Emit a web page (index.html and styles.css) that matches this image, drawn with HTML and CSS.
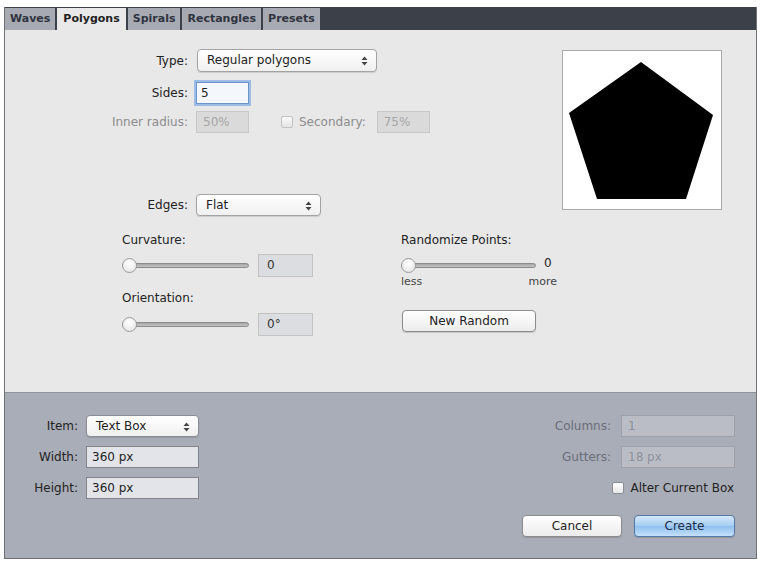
FILE: index.html
```html
<!DOCTYPE html>
<html lang="en">
<head>
  <meta charset="UTF-8">
  <title>Polygons</title>
  <link rel="stylesheet" href="styles.css">
</head>
<body>

  <div class="window">
    <!-- Tabs -->
    <div class="tabs">
      <div class="tab">Waves</div>
      <div class="tab active">Polygons</div>
      <div class="tab">Spirals</div>
      <div class="tab">Rectangles</div>
      <div class="tab">Presets</div>
    </div>

    <!-- Main panel -->
    <div class="panel">
      <div class="top">
        <div class="form">
          <div class="row">
            <label class="lbl">Type:</label>
            <div class="select type-select">Regular polygons
              <svg class="arrows" width="7" height="10" viewBox="0 0 7 10"><path d="M3.5 0.5 L6.5 4 L0.5 4 Z M3.5 9.5 L6.5 6 L0.5 6 Z" fill="#444"/></svg>
            </div>
          </div>
          <div class="row sides-row">
            <label class="lbl">Sides:</label>
            <div class="input focus small">5</div>
          </div>
          <div class="row inner-row">
            <label class="lbl disabled">Inner radius:</label>
            <div class="input off small">50%</div>
            <span class="check"></span>
            <label class="disabled secondary">Secondary:</label>
            <div class="input off small">75%</div>
          </div>
          <div class="row edges-row">
            <label class="lbl">Edges:</label>
            <div class="select edges-select">Flat
              <svg class="arrows" width="7" height="10" viewBox="0 0 7 10"><path d="M3.5 0.5 L6.5 4 L0.5 4 Z M3.5 9.5 L6.5 6 L0.5 6 Z" fill="#444"/></svg>
            </div>
          </div>
        </div>
        <div class="preview">
          <svg width="158" height="158" viewBox="0 0 158 158">
            <polygon points="78,11 150,64 123,148 34,148 6,62" fill="#000"/>
          </svg>
        </div>
      </div>

      <div class="sliders">
        <div class="col">
          <div class="cap">Curvature:</div>
          <div class="slider-row">
            <div class="slider"><span class="thumb"></span></div>
            <div class="input value">0</div>
          </div>
          <div class="cap orient">Orientation:</div>
          <div class="slider-row second">
            <div class="slider"><span class="thumb"></span></div>
            <div class="input value">0°</div>
          </div>
        </div>
        <div class="col">
          <div class="cap">Randomize Points:</div>
          <div class="slider-row">
            <div class="slider wide"><span class="thumb"></span></div>
            <span class="zero">0</span>
          </div>
          <div class="range-labels">
            <span>less</span>
            <span>more</span>
          </div>
          <div class="button random">New Random</div>
        </div>
      </div>
    </div>

    <!-- Bottom panel -->
    <div class="footer">
      <div class="fgrid">
        <label class="flbl">Item:</label>
        <div class="select item-select">Text Box
          <svg class="arrows" width="7" height="10" viewBox="0 0 7 10"><path d="M3.5 0.5 L6.5 4 L0.5 4 Z M3.5 9.5 L6.5 6 L0.5 6 Z" fill="#444"/></svg>
        </div>
        <label class="flbl">Width:</label>
        <div class="input fin">360 px</div>
        <label class="flbl">Height:</label>
        <div class="input fin">360 px</div>
      </div>

      <div class="fright">
        <div class="frow">
          <label class="flbl off-lbl">Columns:</label>
          <div class="input foff">1</div>
        </div>
        <div class="frow gutters">
          <label class="flbl off-lbl">Gutters:</label>
          <div class="input foff">18 px</div>
        </div>
        <div class="frow alter">
          <span class="check fcheck"></span>
          <label>Alter Current Box</label>
        </div>
        <div class="frow buttons">
          <div class="button">Cancel</div>
          <div class="button primary">Create</div>
        </div>
      </div>
    </div>
  </div>

</body>
</html>
```

FILE: styles.css
```css
body {
  margin: 0;
  background-color: #fff;
  font-family: "DejaVu Sans", sans-serif;
  font-size: 12px;
  color: #222;
}

/* Window frame */
.window {
  margin: 7px 0 0 4px;
  width: 753px;
  height: 552px;
  box-sizing: border-box;
  border: 1px solid #6f7176;
  border-top: 0;
  display: flex;
  flex-direction: column;
}

/* Tab bar */
.tabs {
  height: 23px;
  box-sizing: border-box;
  padding-top: 1px;
  background-color: #3c4049;
  display: flex;
  gap: 2px;
}

.tab {
  padding: 0 5px;
  height: 22px;
  line-height: 22px;
  background-color: #a7aab2;
  color: #2f3440;
  font-size: 11px;
  font-weight: bold;
}

.tab.active {
  background-color: #e9e9e9;
  color: #222;
  padding: 0 6px;
}

/* Main panel */
.panel {
  height: 362px;
  background-color: #e8e8e8;
  border-bottom: 1px solid #8f929a;
}

.top {
  display: flex;
  padding-top: 19px;
}

.form {
  flex: 1;
}

.row {
  display: flex;
  align-items: center;
}

.lbl {
  width: 183px;
  margin-right: 8px;
  text-align: right;
}

.disabled {
  color: #8c8c8c;
}

.sides-row {
  margin-top: 10px;
}

.inner-row {
  margin-top: 7px;
}

.edges-row {
  margin-top: 61px;
}

.secondary {
  margin: 0 11px 0 6px;
}

/* Popup buttons */
.select {
  position: relative;
  box-sizing: border-box;
  height: 23px;
  line-height: 21px;
  padding-left: 9px;
  border: 1px solid #a3a3a3;
  border-radius: 4px;
  background: linear-gradient(#ffffff, #f0f0f0);
  box-shadow: 0 1px 1px rgba(0, 0, 0, 0.12);
}

.arrows {
  position: absolute;
  right: 8px;
  top: 6px;
}

.type-select {
  width: 180px;
  margin-left: 1px;
}

.edges-select {
  width: 125px;
  height: 22px;
  line-height: 20px;
}

/* Text fields */
.input {
  box-sizing: border-box;
  height: 22px;
  line-height: 20px;
  padding-left: 6px;
  border: 1px solid #b5b5b5;
  background-color: #fff;
}

.small {
  width: 53px;
}

.focus {
  border: 1px solid #6d93c9;
  box-shadow: 0 0 0 2px #9cbde6;
  padding-left: 4px;
  background-color: #f4f8fd;
}

.off {
  background-color: #dadada;
  border-color: #c8c8c8;
  color: #a6a6a6;
}

.check {
  display: inline-block;
  width: 12px;
  height: 12px;
  margin-left: 32px;
  box-sizing: border-box;
  border: 1px solid #c2c2c2;
  border-radius: 2px;
  background: linear-gradient(#fafafa, #e4e4e4);
}

/* Preview */
.preview {
  width: 160px;
  height: 160px;
  box-sizing: border-box;
  margin: 1px 34px 0 0;
  border: 1px solid #a9a9a9;
  background-color: #fff;
}

/* Sliders */
.sliders {
  display: grid;
  grid-template-columns: 279px 160px;
  padding-left: 117px;
  margin-top: 17px;
}

.cap {
  line-height: 15px;
}

.orient {
  margin-top: 14px;
}

.slider-row {
  display: flex;
  align-items: center;
  margin-top: 6px;
  height: 23px;
}

.slider-row.second {
  margin-top: 7px;
}

.slider {
  position: relative;
  width: 127px;
  height: 5px;
  box-sizing: border-box;
  border: 1px solid #8b8b8b;
  border-radius: 3px;
  background: linear-gradient(#a6a6a6, #c4c4c4);
}

.slider.wide {
  width: 135px;
}

.thumb {
  position: absolute;
  left: -1px;
  top: -6px;
  width: 15px;
  height: 15px;
  box-sizing: border-box;
  border: 1px solid #9a9a9a;
  border-radius: 50%;
  background: radial-gradient(circle at 50% 35%, #ffffff, #e2e2e2);
}

.value {
  width: 55px;
  height: 23px;
  margin-left: 9px;
  padding-left: 8px;
  background-color: #dcdde0;
  border-color: #c3c3c3;
  color: #333;
}

.zero {
  margin-left: 8px;
  margin-top: -6px;
}

.range-labels {
  display: flex;
  justify-content: space-between;
  width: 156px;
  line-height: 12px;
  margin-top: -1px;
  font-size: 11px;
  color: #444;
}

/* Push buttons */
.button {
  box-sizing: border-box;
  width: 100px;
  height: 22px;
  line-height: 20px;
  text-align: center;
  border: 1px solid #8c8c8c;
  border-radius: 4px;
  background: linear-gradient(#ffffff, #ececec);
  box-shadow: 0 1px 1px rgba(0, 0, 0, 0.15);
}

.random {
  width: 134px;
  margin: 22px 0 0 1px;
}

.primary {
  width: 101px;
  border-color: #5479a6;
  background: linear-gradient(#d6e8fa, #a3ccf2 50%, #8fc0ef 51%, #c4e0fb);
  color: #1b2e4a;
}

/* Bottom panel */
.footer {
  flex: 1;
  background-color: #a9adb8;
  display: flex;
  justify-content: space-between;
  padding: 22px 21px 0 0;
}

.fgrid {
  display: grid;
  grid-template-columns: 73px 113px;
  grid-auto-rows: 22px;
  column-gap: 8px;
  row-gap: 9px;
  align-items: center;
  align-content: start;
}

.flbl {
  text-align: right;
}

.item-select {
  height: 22px;
  line-height: 20px;
  border-color: #8a8d95;
}

.fin {
  background-color: #e2e4ea;
  border-color: #80838c;
  padding-left: 5px;
}

.fright {
  display: flex;
  flex-direction: column;
  align-items: flex-end;
}

.frow {
  display: flex;
  align-items: center;
  gap: 10px;
}

.off-lbl {
  color: #6a6e79;
}

.foff {
  width: 114px;
  background-color: #babdc6;
  border-color: #9ea1aa;
  color: #8e919b;
}

.gutters {
  margin-top: 9px;
}

.alter {
  margin-top: 13px;
  gap: 6px;
  margin-right: 1px;
}

.fcheck {
  margin-left: 0;
  border-color: #8a8d95;
  background: linear-gradient(#ffffff, #e6e7ea);
}

.buttons {
  margin-top: 20px;
  gap: 12px;
}
```
